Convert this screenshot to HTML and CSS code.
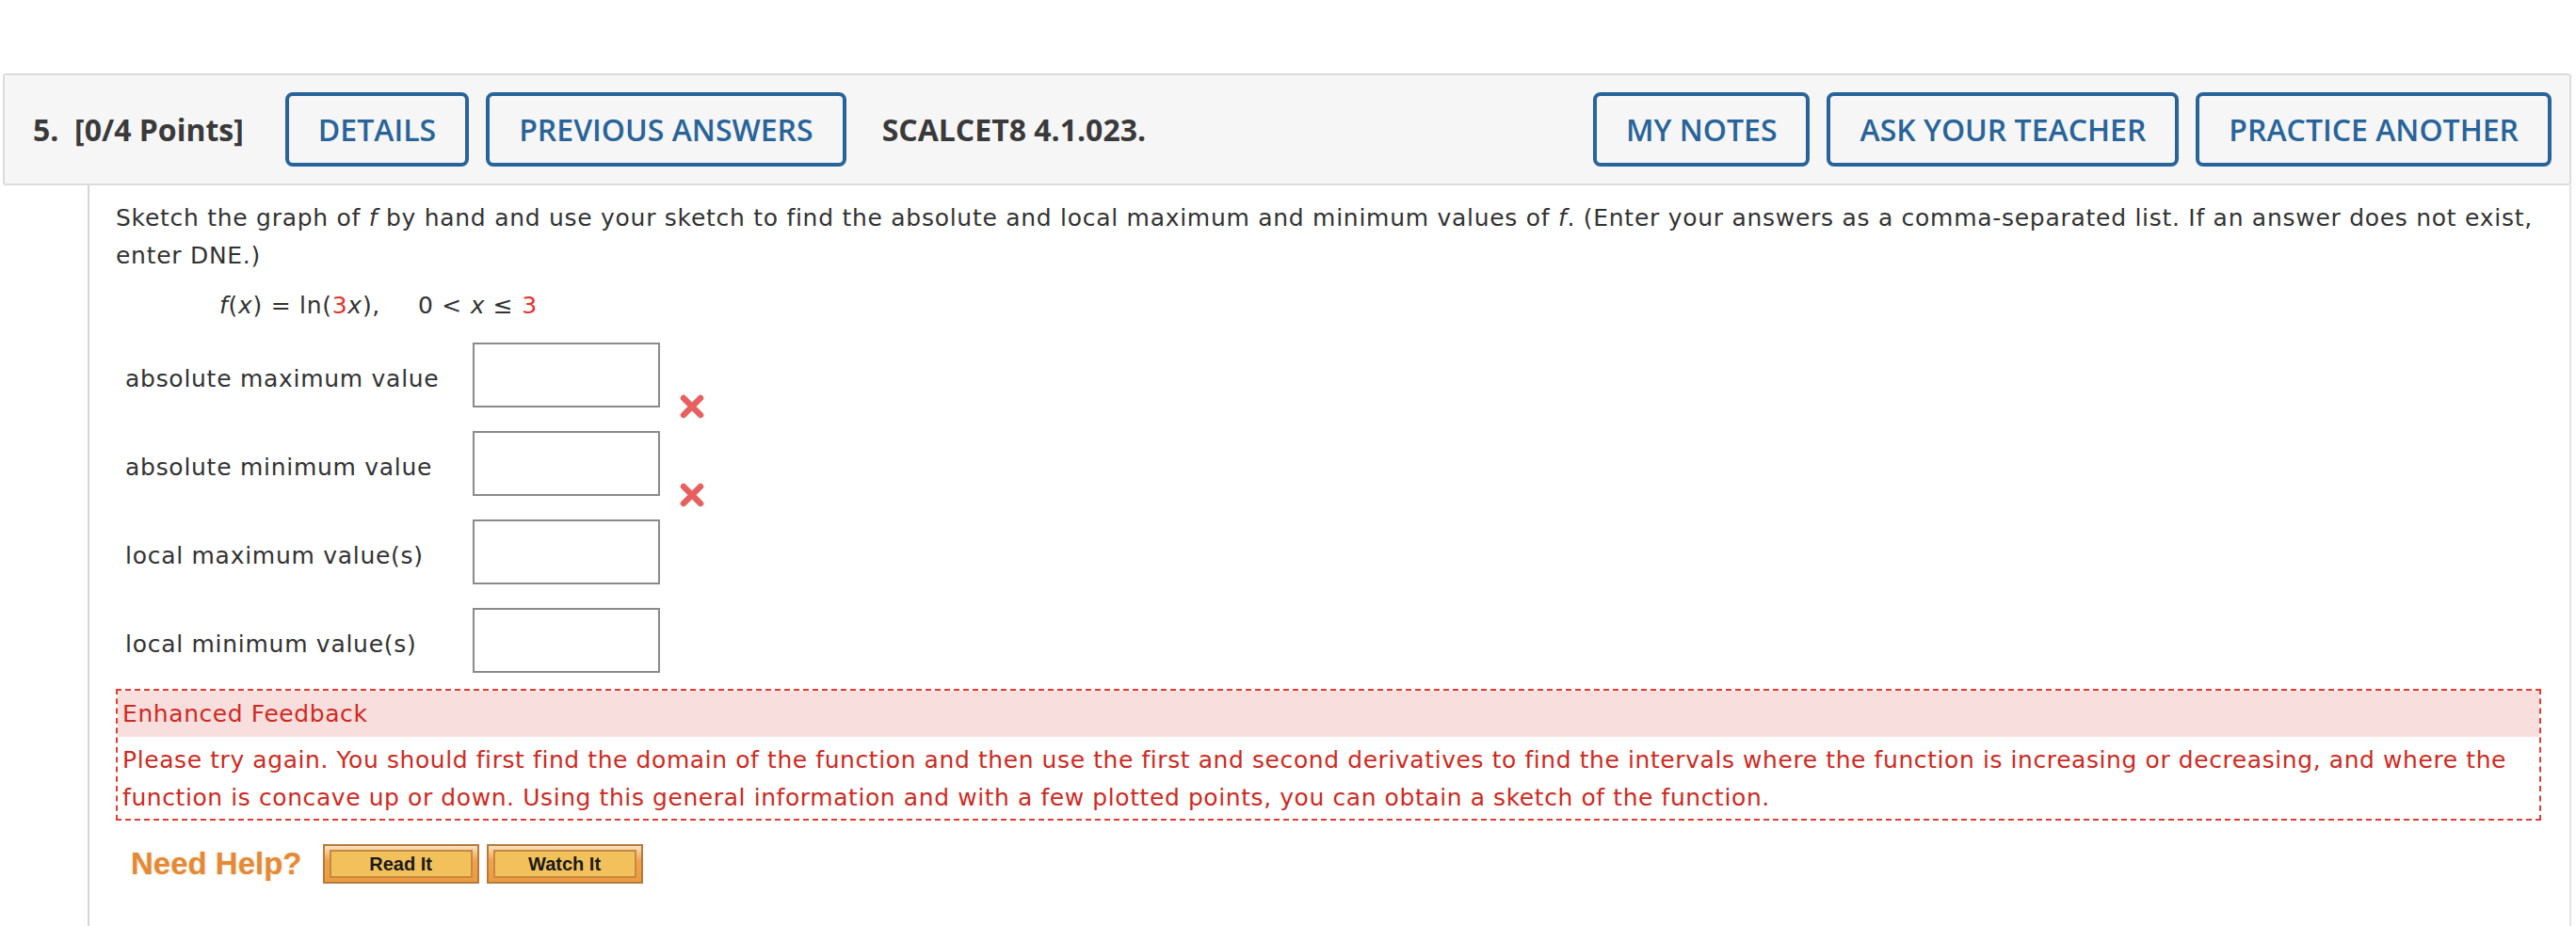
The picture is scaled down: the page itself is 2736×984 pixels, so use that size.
FILE: index.html
```html
<!DOCTYPE html>
<html lang="en">
<head>
<meta charset="utf-8">
<title>SCALCET8 4.1.023</title>
<link rel="stylesheet" href="styles.css">
</head>
<body>
<div class="page">
  <div class="qhead">
    <span class="qnum">5.&nbsp; [0/4 Points]</span>
    <span class="btn btn-first">DETAILS</span>
    <span class="btn">PREVIOUS ANSWERS</span>
    <span class="qcode">SCALCET8 4.1.023.</span>
    <span class="btn btn-right">MY NOTES</span>
    <span class="btn">ASK YOUR TEACHER</span>
    <span class="btn">PRACTICE ANOTHER</span>
  </div>
  <div class="qbody">
    <p class="prompt">Sketch the graph of <i>f</i> by hand and use your sketch to find the absolute and local maximum and minimum values of <i>f</i>. (Enter your answers as a comma-separated list. If an answer does not exist, enter DNE.)</p>
    <p class="formula"><i>f</i>(<i>x</i>) = ln(<span class="red">3</span><i>x</i>),<span class="domain">0 &lt; <i>x</i> ≤ <span class="red">3</span></span></p>

    <div class="answers">
      <div class="arow">
        <span class="alabel">absolute maximum value</span>
        <span class="abox"></span>
        <svg class="xmark" viewBox="0 0 28 28" width="28" height="28"><path d="M5 5 L23 23 M23 5 L5 23" stroke="#e85f5f" stroke-width="6.5" stroke-linecap="round"/></svg>
      </div>
      <div class="arow">
        <span class="alabel">absolute minimum value</span>
        <span class="abox"></span>
        <svg class="xmark" viewBox="0 0 28 28" width="28" height="28"><path d="M5 5 L23 23 M23 5 L5 23" stroke="#e85f5f" stroke-width="6.5" stroke-linecap="round"/></svg>
      </div>
      <div class="arow">
        <span class="alabel">local maximum value(s)</span>
        <span class="abox"></span>
      </div>
      <div class="arow">
        <span class="alabel">local minimum value(s)</span>
        <span class="abox"></span>
      </div>
    </div>

    <div class="feedback">
      <div class="fb-title">Enhanced Feedback</div>
      <div class="fb-text">Please try again. You should first find the domain of the function and then use the first and second derivatives to find the intervals where the function is increasing or decreasing, and where the function is concave up or down. Using this general information and with a few plotted points, you can obtain a sketch of the function.</div>
    </div>

    <div class="help">
      <span class="help-label">Need Help?</span>
      <span class="hbtn"><span class="hbtn-in">Read It</span></span>
      <span class="hbtn"><span class="hbtn-in">Watch It</span></span>
    </div>
  </div>
</div>
</body>
</html>
```

FILE: styles.css
```css
html, body {
  margin: 0;
  padding: 0;
  background: #ffffff;
}

.page {
  padding: 78px 5px 0 3px;
  font-family: "DejaVu Sans", Verdana, sans-serif;
  color: #333333;
}

.qhead {
  box-sizing: border-box;
  height: 119px;
  display: flex;
  align-items: center;
  padding: 0 19px 0 30px;
  background: #f6f6f6;
  border: 2px solid #dcdcdc;
  border-radius: 3px;
  font-family: "Open Sans", sans-serif;
}

.qnum, .qcode {
  font-weight: 700;
  font-size: 32px;
  color: #3a3a3a;
  white-space: nowrap;
}

.qcode {
  margin-left: 38px;
}

.btn {
  box-sizing: border-box;
  height: 79px;
  display: flex;
  align-items: center;
  padding: 0 31px;
  margin-left: 18px;
  border: 4px solid #28649a;
  border-radius: 8px;
  color: #28649a;
  font-weight: 600;
  font-size: 32px;
  white-space: nowrap;
}

.btn-first {
  margin-left: 44px;
}

.btn-right {
  margin-left: auto;
}

.qbody {
  box-sizing: border-box;
  margin-left: 90px;
  min-height: calc(100vh - 197px);
  padding: 15px 30px 20px 28px;
  border-left: 2px solid #d4d4d4;
  border-right: 2px solid #e2e2e2;
  font-size: 25px;
  line-height: 40px;
  letter-spacing: 0.72px;
}

.prompt {
  margin: 0;
}

.formula {
  margin: 13px 0 0 0;
  padding-left: 110px;
}

.red {
  color: #e8302a;
}

.domain {
  margin-left: 40px;
}

.answers {
  margin-top: 19px;
  padding-left: 10px;
  display: flex;
  flex-direction: column;
  gap: 25px;
}

.arow {
  display: flex;
  align-items: center;
  height: 69px;
}

.alabel {
  width: 369px;
  padding-top: 9px;
}

.abox {
  box-sizing: border-box;
  width: 199px;
  height: 69px;
  border: 2px solid #8a8a8a;
  background: #ffffff;
}

.xmark {
  align-self: flex-end;
  margin: 0 0 -13px 20px;
  filter: blur(0.5px);
}

.feedback {
  margin-top: 17px;
  border: 2px dashed #e33a2f;
  color: #cf2a21;
  letter-spacing: 0.58px;
}

.fb-title {
  height: 49px;
  line-height: 49px;
  padding-left: 5px;
  background: #f9dede;
}

.fb-text {
  padding: 5px 5px 2px 5px;
}

.help {
  display: flex;
  align-items: center;
  margin-top: 25px;
  padding-left: 16px;
  letter-spacing: 0;
}

.help-label {
  font-family: "Liberation Sans", Arial, sans-serif;
  font-weight: 700;
  font-size: 33px;
  color: #e48a36;
  text-shadow: 0 0 2px rgba(240, 170, 100, 0.5);
  margin-right: 22px;
}

.hbtn {
  box-sizing: border-box;
  width: 166px;
  height: 42px;
  margin-right: 8px;
  padding: 4px 5px;
  border: 2px solid #b27c3e;
  background: linear-gradient(#fbe2bc, #f2a24c 40%, #ef9a3e);
  display: flex;
}

.hbtn-in {
  flex: 1;
  display: flex;
  align-items: center;
  justify-content: center;
  border: 2px solid #c38a44;
  background: #f3c15c;
  font-family: "Liberation Sans", Arial, sans-serif;
  font-weight: 700;
  font-size: 20px;
  line-height: 1;
  color: #1a1a1a;
}
```
